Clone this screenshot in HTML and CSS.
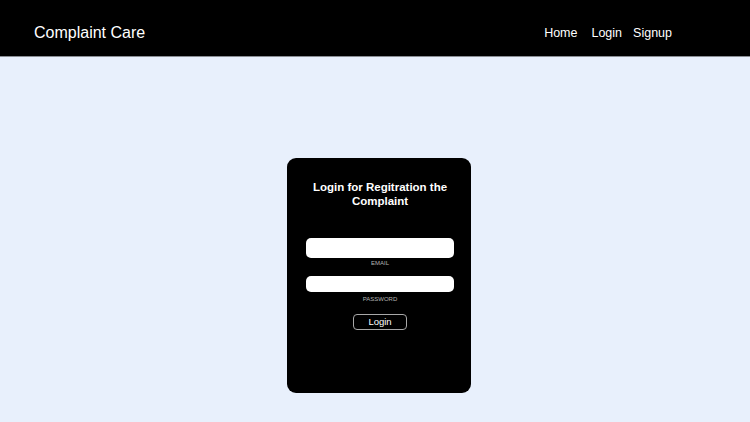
FILE: index.html
```html
<!DOCTYPE html>
<html lang="en">
<head>
<meta charset="utf-8">
<title>Complaint Care</title>
<link rel="stylesheet" href="styles.css">
</head>
<body>
<header class="topbar">
  <div class="brand">Complaint Care</div>
  <nav class="nav">
    <a class="nav-link nav-home" href="#">Home</a>
    <a class="nav-link nav-login" href="#">Login</a>
    <a class="nav-link" href="#">Signup</a>
  </nav>
</header>
<main class="main">
  <form class="card">
    <h2 class="title">Login for Regitration the Complaint</h2>
    <div class="field field-email">
      <input class="input input-email" type="email">
      <label class="label">EMAIL</label>
    </div>
    <div class="field field-pass">
      <input class="input input-pass" type="password">
      <label class="label label-pass">PASSWORD</label>
    </div>
    <button class="btn" type="button">Login</button>
  </form>
</main>
</body>
</html>
```

FILE: styles.css
```css
html, body {
  margin: 0;
  padding: 0;
}
body {
  background: #e8f0fc;
  font-family: "Liberation Sans", Arial, sans-serif;
  height: 422px;
  overflow: hidden;
}
.topbar {
  height: 57px;
  background: #000;
  border-bottom: 1px solid #8a8e94;
  box-sizing: border-box;
  display: flex;
  align-items: flex-start;
  padding: 0 78px 0 34px;
}
.brand {
  color: #fff;
  font-size: 16px;
  line-height: 18px;
  margin-top: 24px;
}
.nav {
  margin-left: auto;
  display: flex;
  align-items: flex-start;
  margin-top: 26px;
}
.nav-link {
  color: #fff;
  text-decoration: none;
  font-size: 12.5px;
  line-height: 14px;
}
.nav-home { margin-right: 14px; }
.nav-login { margin-right: 11px; }
.main {
  display: flex;
  justify-content: center;
  padding: 101px 0 0 8px;
}
.card {
  width: 184px;
  height: 235px;
  box-sizing: border-box;
  background: #000;
  border-radius: 9px;
  padding: 23px 17px 0 19px;
  display: flex;
  flex-direction: column;
  align-items: center;
}
.title {
  margin: 0;
  color: #fff;
  font-size: 11.5px;
  line-height: 13.5px;
  font-weight: bold;
  text-align: center;
}
.field {
  width: 148px;
  display: flex;
  flex-direction: column;
  align-items: center;
}
.field-email { margin-top: 30px; }
.field-pass { margin-top: 9px; }
.input {
  width: 148px;
  box-sizing: border-box;
  border: none;
  border-radius: 5px;
  background: #fff;
  margin: 0;
  padding: 0 6px;
  outline: none;
}
.input-email { height: 20px; }
.input-pass { height: 16px; }
.label {
  color: #b4b4b4;
  font-size: 6px;
  line-height: 7px;
  margin-top: 2px;
}
.label-pass { margin-top: 4px; }
.btn {
  margin-top: 11px;
  width: 54px;
  height: 16px;
  box-sizing: border-box;
  background: #000;
  color: #fff;
  border: 1px solid #a8a8a8;
  border-radius: 4px;
  font-family: "Liberation Sans", Arial, sans-serif;
  font-size: 9.5px;
  padding: 0;
  line-height: 14px;
}
```
